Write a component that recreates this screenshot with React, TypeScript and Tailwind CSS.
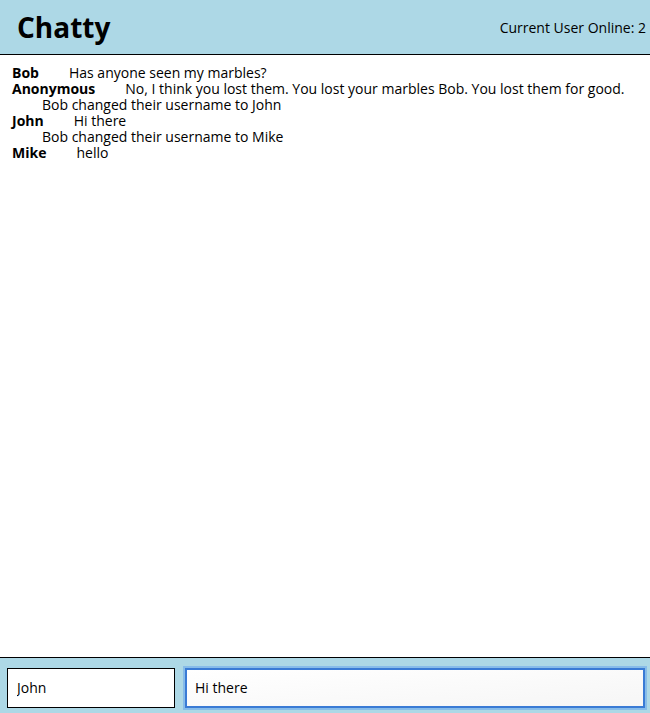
import React, { useState } from 'react';

type Message =
  | { type: 'message'; username: string; content: string }
  | { type: 'notification'; content: string };

const messages: Message[] = [
  { type: 'message', username: 'Bob', content: 'Has anyone seen my marbles?' },
  {
    type: 'message',
    username: 'Anonymous',
    content: 'No, I think you lost them. You lost your marbles Bob. You lost them for good.',
  },
  { type: 'notification', content: 'Bob changed their username to John' },
  { type: 'message', username: 'John', content: 'Hi there' },
  { type: 'notification', content: 'Bob changed their username to Mike' },
  { type: 'message', username: 'Mike', content: 'hello' },
];

const App: React.FC = () => {
  const [name, setName] = useState('John');
  const [draft, setDraft] = useState('Hi there');

  return (
    <div className="h-[713px] w-[650px] flex flex-col bg-white text-black font-['Open_Sans',sans-serif] overflow-hidden">
      <nav className="h-[55px] shrink-0 bg-[#add8e6] border-b border-black flex items-center justify-between pl-[17px] pr-[4px]">
        <h1 className="text-[28px] font-bold leading-none">Chatty</h1>
        <span className="text-[14px]">Current User Online: 2</span>
      </nav>

      <main className="flex-1 pt-[10px] px-[12px] text-[14px] leading-[16px]">
        {messages.map((m, i) =>
          m.type === 'message' ? (
            <div key={i} className="flex">
              <span className="font-bold">{m.username}</span>
              <span className="ml-[30px]">{m.content}</span>
            </div>
          ) : (
            <div key={i} className="pl-[30px]">
              {m.content}
            </div>
          )
        )}
      </main>

      <footer className="h-[56px] shrink-0 bg-[#add8e6] border-t border-black flex items-center gap-[10px] px-[7px] pb-[3px] pt-[7px]">
        <input
          value={name}
          onChange={(e) => setName(e.target.value)}
          className="w-[168px] h-[40px] border border-black bg-white px-[9px] text-[14px] outline-none"
        />
        <input
          value={draft}
          onChange={(e) => setDraft(e.target.value)}
          autoFocus
          className="flex-1 mr-[-2px] h-[40px] border-2 border-[#3a7bd5] bg-gradient-to-br from-white to-[#f6f6f6] px-[8px] text-[14px] outline-none shadow-[0_0_0_2px_rgba(110,170,235,0.6)] caret-black"
        />
      </footer>
    </div>
  );
};

export default App;
